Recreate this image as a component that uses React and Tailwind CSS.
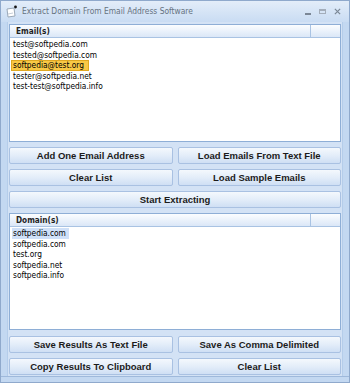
import React from 'react';

const emails = [
  'test@softpedia.com',
  'tested@softpedia.com',
  'softpedia@test.org',
  'tester@softpedia.net',
  'test-test@softpedia.info',
];

const domains = ['softpedia.com', 'softpedia.com', 'test.org', 'softpedia.net', 'softpedia.info'];

const listFont = { fontFamily: '"DejaVu Sans Condensed", "Liberation Sans", Arial, sans-serif' };

function Btn({ children, className = '' }) {
  return (
    <button
      className={
        'h-[17px] flex items-center justify-center rounded-[2px] border border-[#a9c1e2] bg-gradient-to-b from-[#f4f8fd] via-[#e3edf9] to-[#cfdff4] text-[9.5px] font-bold text-[#1b1b1b] leading-none ' +
        className
      }
    >
      {children}
    </button>
  );
}

function ListBox({ title, items, height, renderItem }) {
  return (
    <div className="bg-white border border-[#8eaed6] flex flex-col" style={{ height }}>
      <div className="h-[13px] flex border-b border-[#a9c3e3] bg-gradient-to-b from-[#fbfdff] to-[#dbe7f7]">
        <div
          className="w-[301px] border-r border-[#a9c3e3] pl-[6px] text-[8.2px] font-bold leading-[13px] text-[#1f1f1f]"
          style={listFont}
        >
          {title}
        </div>
        <div className="flex-1" />
      </div>
      <div className="pt-[1px]" style={listFont}>
        {items.map(renderItem)}
      </div>
    </div>
  );
}

export default function App() {
  return (
    <div
      className="w-[350px] h-[383px] bg-[#c3d8f1] flex flex-col overflow-hidden border border-[#8fa9cc]"
      style={{ fontFamily: '"Liberation Sans", Arial, sans-serif' }}
    >
      {/* title bar */}
      <div className="h-[21px] flex items-center bg-gradient-to-b from-[#e3edf9] to-[#c9dcf3] pl-[4px] pr-[8px]">
        <svg width="13" height="13" viewBox="0 0 13 13" className="mr-[4px]">
          <path d="M2 4 L9 3 L10 11 L3 12 Z" fill="#fff" stroke="#9aa8b8" strokeWidth="1" />
          <path d="M3 9 L8 8" stroke="#c7cfd9" strokeWidth="1" />
          <circle cx="10.5" cy="2" r="1.4" fill="#111" />
        </svg>
        <span className="text-[8.4px] text-[#66727f]" style={listFont}>
          Extract Domain From Email Address Software
        </span>
        <div className="flex-1" />
        <div className="flex items-center gap-[8px]">
          <div className="w-[6px] h-[1.5px] bg-[#7b8796] mt-[5px]" />
          <div className="w-[7px] h-[5px] border border-[#a3adba] border-t-2" />
          <svg width="7" height="7" viewBox="0 0 8 8">
            <path d="M1 1 L7 7 M7 1 L1 7" stroke="#7b8796" strokeWidth="1.4" />
          </svg>
        </div>
      </div>

      {/* body */}
      <div className="flex-1 mx-[6px] bg-[#d3e2f5] px-[1px] pt-[2px] border-x border-[#b5cdea]">
        <ListBox
          title="Email(s)"
          items={emails}
          height={118}
          renderItem={(e, i) => (
            <div key={i} className="h-[10.5px] leading-[10.5px] pl-[3px] text-[8.3px] text-black">
              {i === 2 ? (
                <span className="inline-block bg-[#f8c846] border border-[#e0a820] pl-[1px] pr-[4px] leading-[8.5px] -ml-[2px]">
                  {e}
                </span>
              ) : (
                e
              )}
            </div>
          )}
        />

        <div className="grid grid-cols-2 gap-x-[5px] gap-y-[5px] mt-[5px]">
          <Btn>Add One Email Address</Btn>
          <Btn>Load Emails From Text File</Btn>
          <Btn>Clear List</Btn>
          <Btn>Load Sample Emails</Btn>
          <Btn className="col-span-2">Start Extracting</Btn>
        </div>

        <div className="mt-[5px]">
          <ListBox
            title="Domain(s)"
            items={domains}
            height={117}
            renderItem={(d, i) => (
              <div key={i} className="h-[10.5px] leading-[10.5px] pl-[3px] text-[8.3px] text-black">
                {i === 0 ? (
                  <span className="inline-block bg-[#cfe0f8] pr-[3px] -ml-[1px] pl-[1px]">{d}</span>
                ) : (
                  d
                )}
              </div>
            )}
          />
        </div>

        <div className="grid grid-cols-2 gap-x-[5px] gap-y-[5px] mt-[6px]">
          <Btn>Save Results As Text File</Btn>
          <Btn>Save As Comma Delimited</Btn>
          <Btn>Copy Results To Clipboard</Btn>
          <Btn>Clear List</Btn>
        </div>
      </div>
      <div className="h-[6px] border-t border-[#9fb9db]" />
    </div>
  );
}
